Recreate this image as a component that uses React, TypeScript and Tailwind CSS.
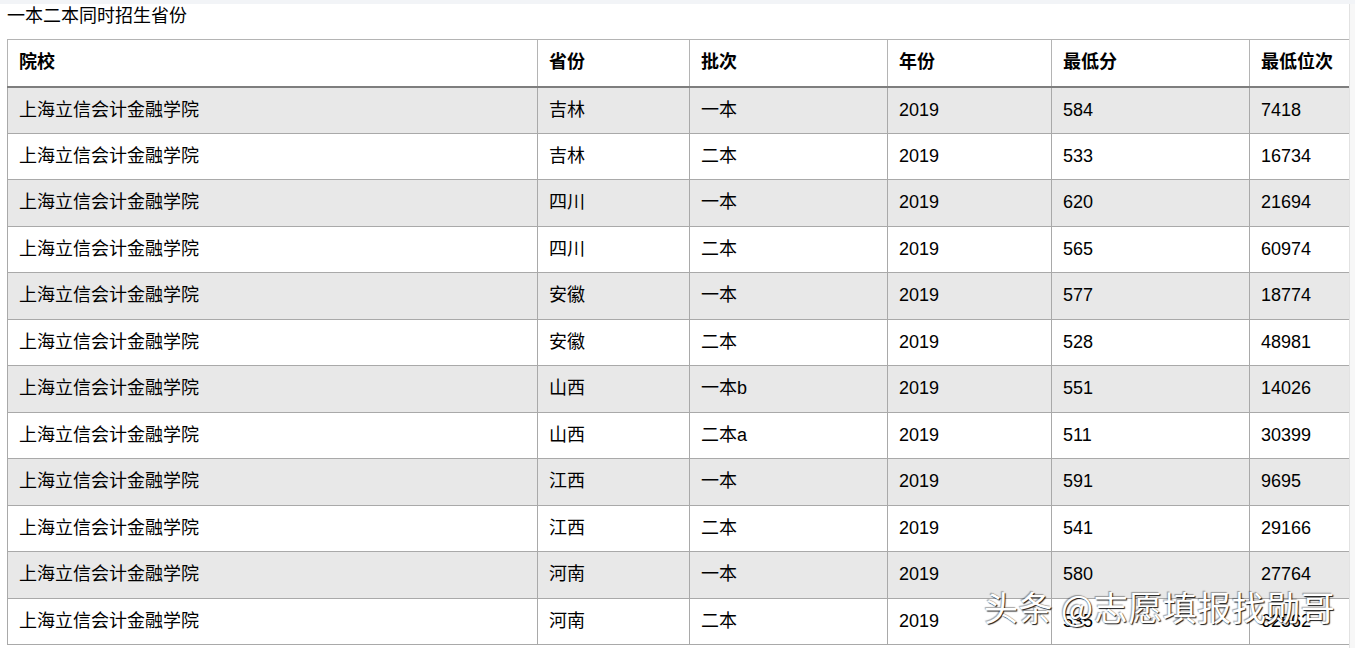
import React from "react";

const rows = [
  ["上海立信会计金融学院", "吉林", "一本", "2019", "584", "7418"],
  ["上海立信会计金融学院", "吉林", "二本", "2019", "533", "16734"],
  ["上海立信会计金融学院", "四川", "一本", "2019", "620", "21694"],
  ["上海立信会计金融学院", "四川", "二本", "2019", "565", "60974"],
  ["上海立信会计金融学院", "安徽", "一本", "2019", "577", "18774"],
  ["上海立信会计金融学院", "安徽", "二本", "2019", "528", "48981"],
  ["上海立信会计金融学院", "山西", "一本b", "2019", "551", "14026"],
  ["上海立信会计金融学院", "山西", "二本a", "2019", "511", "30399"],
  ["上海立信会计金融学院", "江西", "一本", "2019", "591", "9695"],
  ["上海立信会计金融学院", "江西", "二本", "2019", "541", "29166"],
  ["上海立信会计金融学院", "河南", "一本", "2019", "580", "27764"],
  ["上海立信会计金融学院", "河南", "二本", "2019", "535", "62562"],
];

const headers = ["院校", "省份", "批次", "年份", "最低分", "最低位次"];
const widths = ["w-[530px]", "w-[152px]", "w-[198px]", "w-[164px]", "w-[198px]", "w-[100px]"];

export default function App() {
  return (
    <div className="relative w-[1355px] h-[648px] overflow-hidden bg-white text-black font-['Liberation_Sans','Noto_Sans_CJK_SC',sans-serif]">
      <div className="h-[4px] bg-[#f2f4f7]" />
      <div className="flex">
        <div className="w-[1349px] shrink-0">
          {/* Title */}
          <div className="h-[35px] pl-[7px] text-[18px] leading-[24px]">一本二本同时招生省份</div>

          <table className="ml-[7px] w-[1342px] table-fixed border-collapse text-[18px]">
            <colgroup>
              {widths.map((w, i) => (
                <col key={i} className={w} />
              ))}
            </colgroup>
            <thead>
              <tr className="h-[47px] bg-white border-b-2 border-b-[#7e7e7e]">
                {headers.map((h) => (
                  <th
                    key={h}
                    className="border border-[#b4b4b4] border-b-2 border-b-[#7e7e7e] pl-[11px] text-left align-middle font-bold"
                  >
                    {h}
                  </th>
                ))}
              </tr>
            </thead>
            <tbody>
              {rows.map((r, i) => (
                <tr key={i} className={"h-[46.5px] " + (i % 2 === 0 ? "bg-[#e8e8e8]" : "bg-white")}>
                  {r.map((c, j) => (
                    <td key={j} className="border border-[#a9a9a9] pl-[11px] align-middle">
                      {c}
                    </td>
                  ))}
                </tr>
              ))}
            </tbody>
          </table>
        </div>
        <div className="flex-1 h-[648px] border-l border-[#e2e2e2] bg-[#f7f7f7]" />
      </div>

      {/* Watermark */}
      <div className="absolute left-[984px] top-[586px] text-[34px] leading-[42px] text-white tracking-[0.5px] font-['Noto_Sans_CJK_SC',sans-serif] [text-shadow:1px_1px_1px_rgba(0,0,0,0.9),-1px_-1px_1px_rgba(0,0,0,0.35)]">
        头条 @志愿填报找勋哥
      </div>
    </div>
  );
}
